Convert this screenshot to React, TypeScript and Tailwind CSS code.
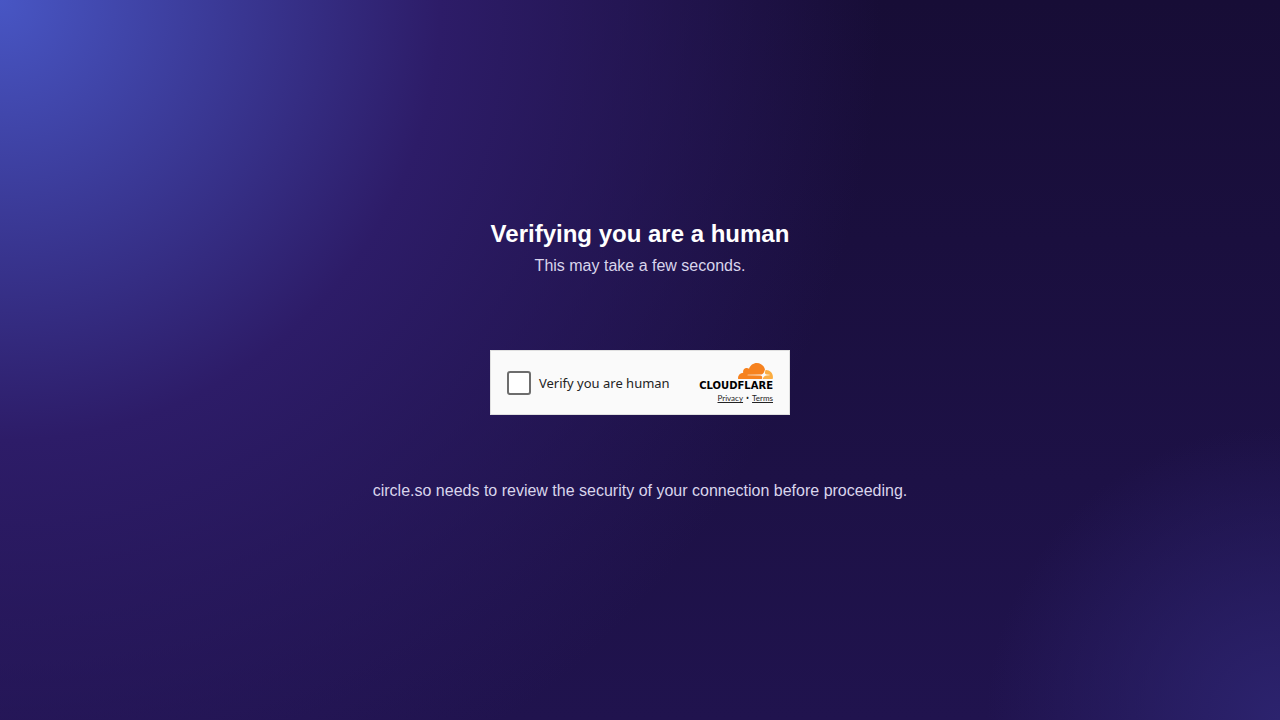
function CloudMark() {
  return (
    <svg
      viewBox="38 0 35 16"
      className="w-[35px] h-4"
      aria-hidden="true"
    >
      <path
        fill="#f6821f"
        d="M61.885 15.784l.178-.626c.213-.745.134-1.434-.223-1.94-.328-.466-.875-.74-1.54-.773l-12.58-.161a.25.25 0 0 1-.198-.107.28.28 0 0 1-.029-.23.36.36 0 0 1 .293-.227l12.697-.163c1.506-.07 3.137-1.31 3.708-2.823l.724-1.92a.45.45 0 0 0 .02-.254C64.112 2.807 60.812 0 56.865 0c-3.636 0-6.723 2.382-7.83 5.692a3.7 3.7 0 0 0-2.612-.734c-1.745.176-3.147 1.601-3.32 3.372a3.9 3.9 0 0 0 .096 1.32c-2.85.083-5.135 2.453-5.135 5.365q0 .393.057.777a.25.25 0 0 0 .243.215l23.225.003a.31.31 0 0 0 .296-.226z"
      />
      <path
        fill="#fbad41"
        d="M66.076 6.953q-.175 0-.349.009a.22.22 0 0 0-.181.147l-.495 1.734c-.212.745-.133 1.434.224 1.94.328.466.875.74 1.539.772l2.682.164a.24.24 0 0 1 .191.105.28.28 0 0 1 .028.232.36.36 0 0 1-.291.226l-2.787.163c-1.513.071-3.143 1.31-3.714 2.823l-.201.534a.15.15 0 0 0 .132.205h9.591a.25.25 0 0 0 .247-.189 7.1 7.1 0 0 0 .253-1.887c0-3.85-3.074-6.978-6.869-6.978z"
      />
    </svg>
  );
}

function Challenge() {
  return (
    <div className="flex items-center justify-between w-[300px] max-w-full h-[65px] px-4 pt-0.5 bg-[#fafafa] border border-[#e0e0e0] font-['Noto_Sans',sans-serif] text-[#232323]">
      <label className="flex items-center gap-2 text-[13px] leading-5 whitespace-nowrap">
        <input
          type="checkbox"
          className="appearance-none w-6 h-6 shrink-0 rounded-[3px] border-2 border-[#6d6d6d] bg-white checked:bg-[#c44d0e]"
        />
        Verify you are human
      </label>
      <div className="flex flex-col items-end">
        <CloudMark />
        <span className="font-['DejaVu_Sans',sans-serif] font-bold text-[10px] leading-[14px] text-black">
          CLOUDFLARE
        </span>
        <div className="flex gap-[3px] text-[8px] leading-[10px]">
          <a href="#privacy" className="font-['Lato',sans-serif] underline">
            Privacy
          </a>
          <span>•</span>
          <a href="#terms" className="font-['Lato',sans-serif] underline">
            Terms
          </a>
        </div>
      </div>
    </div>
  );
}

export default function App() {
  return (
    <main className="min-h-screen flex flex-col items-center justify-center px-4 text-center font-['Liberation_Sans',Arial,sans-serif] text-[#d9d5ec] bg-[radial-gradient(circle_at_0_0,#4856c4_0%,#2d1c68_30%,transparent_60%),radial-gradient(circle_at_100%_100%,#2c236e_0%,transparent_20%),linear-gradient(180deg,#170d36,#20134e)]">
      <h1 className="text-2xl font-bold text-white">Verifying you are a human</h1>
      <p className="mt-1 text-base">This may take a few seconds.</p>
      <div className="mt-18 mb-16 text-left">
        <Challenge />
      </div>
      <p className="text-base">
        circle.so needs to review the security of your connection before
        proceeding.
      </p>
    </main>
  );
}
